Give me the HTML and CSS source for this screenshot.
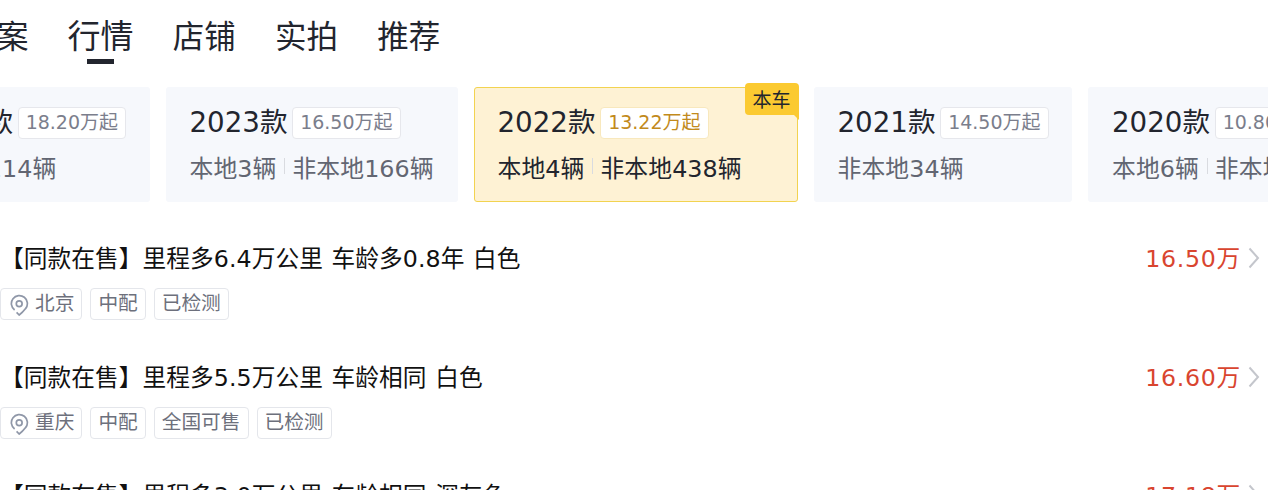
FILE: index.html
```html
<!DOCTYPE html>
<html lang="zh-CN">
<head>
  <meta charset="UTF-8">
  <meta name="viewport" content="width=device-width, initial-scale=1.0">
  <title>行情</title>
  <link rel="stylesheet" href="styles.css">
</head>
<body>
  <!-- 图标 -->
  <svg class="symbols">
    <symbol id="pin" viewBox="0 0 20 22">
      <path d="M5.6 16A8 8 0 1 1 16.6 14.6Q13.6 18.6 10.2 21L7.6 18.4" />
      <circle cx="10.2" cy="9.8" r="2.9" />
    </symbol>
    <symbol id="arrow" viewBox="0 0 12 22">
      <path d="M1.5 1.5 10 11 1.5 20.5" />
    </symbol>
  </svg>

  <div class="page">
    <ul class="tabs">
      <li>档案</li>
      <li class="active">行情</li>
      <li>店铺</li>
      <li>实拍</li>
      <li>推荐</li>
    </ul>

    <!-- 年款列表 -->
    <div class="years">
      <div class="year-card w-259">
        <div class="year-title">2024款<span class="price-tag">18.20万起</span></div>
        <div class="year-count"><span>非本地114辆</span></div>
      </div>
      <div class="year-card w-292">
        <div class="year-title">2023款<span class="price-tag">16.50万起</span></div>
        <div class="year-count"><span>本地3辆</span><i></i><span>非本地166辆</span></div>
      </div>
      <div class="year-card w-324 current">
        <div class="corner">本车</div>
        <div class="year-title">2022款<span class="price-tag">13.22万起</span></div>
        <div class="year-count"><span>本地4辆</span><i></i><span>非本地438辆</span></div>
      </div>
      <div class="year-card w-259">
        <div class="year-title">2021款<span class="price-tag">14.50万起</span></div>
        <div class="year-count"><span>非本地34辆</span></div>
      </div>
      <div class="year-card w-292">
        <div class="year-title">2020款<span class="price-tag">10.80万起</span></div>
        <div class="year-count"><span>本地6辆</span><i></i><span>非本地120辆</span></div>
      </div>
    </div>

    <!-- 同款在售列表 -->
    <div class="cars">
      <div class="car">
        <div class="car-head">
          <div class="car-title">【同款在售】里程多6.4万公里 车龄多0.8年 白色</div>
          <div class="car-price">16.50万<svg class="arrow"><use href="#arrow" /></svg></div>
        </div>
        <div class="tags">
          <span><svg class="pin"><use href="#pin" /></svg>北京</span>
          <span>中配</span>
          <span>已检测</span>
        </div>
      </div>
      <div class="car">
        <div class="car-head">
          <div class="car-title">【同款在售】里程多5.5万公里 车龄相同 白色</div>
          <div class="car-price">16.60万<svg class="arrow"><use href="#arrow" /></svg></div>
        </div>
        <div class="tags">
          <span><svg class="pin"><use href="#pin" /></svg>重庆</span>
          <span>中配</span>
          <span>全国可售</span>
          <span>已检测</span>
        </div>
      </div>
      <div class="car">
        <div class="car-head">
          <div class="car-title">【同款在售】里程多3.0万公里 车龄相同 深灰色</div>
          <div class="car-price">17.18万<svg class="arrow"><use href="#arrow" /></svg></div>
        </div>
      </div>
    </div>
  </div>
</body>
</html>
```
FILE: styles.css
```css
* {
  box-sizing: border-box;
}

body {
  margin: 0;
  background: #fff;
  color: #22252e;
  font-family: "DejaVu Sans", "Noto Sans CJK SC", sans-serif;
}

.symbols {
  display: none;
}

.page {
  width: 1268px;
  height: 490px;
  overflow: hidden;
}

/* 顶部标签 */
.tabs {
  display: flex;
  gap: 39.2px;
  height: 87px;
  margin: 0 0 0 -34.6px;
  padding: 0;
  list-style: none;
  font-size: 31.5px;
  line-height: 74px;
  white-space: nowrap;
}

.tabs .active {
  display: flex;
  flex-direction: column;
  align-items: center;
  font-size: 33px;
}

.tabs .active::after {
  content: "";
  width: 27px;
  height: 5px;
  margin-top: -15px;
  background: #22252e;
}

/* 年款卡片 */
.years {
  display: flex;
  gap: 16px;
  margin-left: -109px;
}

.year-card {
  position: relative;
  flex: none;
  height: 114.5px;
  padding: 19px 0 0 24px;
  border-radius: 3px;
  background: #f6f8fc;
  white-space: nowrap;
}

.w-259 {
  width: 258.5px;
}

.w-292 {
  width: 292px;
}

.w-324 {
  width: 324px;
}

.year-title {
  display: flex;
  align-items: center;
  height: 34px;
  font-size: 27.7px;
  line-height: 30px;
}

.price-tag {
  height: 32px;
  margin: 0 0 0 4.5px;
  padding: 0 7px;
  border: 1px solid #e6e7ec;
  border-radius: 4px;
  background: #fff;
  color: #7b7e8c;
  font-size: 19px;
  line-height: 28px;
}

.year-count {
  display: flex;
  align-items: center;
  height: 34px;
  margin-top: 9px;
  color: #626672;
  font-size: 23.8px;
  letter-spacing: 0.1px;
}

.year-count i {
  width: 1px;
  height: 16px;
  margin: 0 7px 0 8px;
  background: #d9dbe0;
}

.current {
  padding: 18px 0 0 23px;
  border: 1px solid #f2d350;
  background: #fef2d4;
}

.current .year-count {
  color: #22252e;
}

.current .price-tag {
  border-color: #f8e8bd;
  color: #c28a1c;
}

.corner {
  position: absolute;
  top: -5px;
  right: -2px;
  width: 54px;
  height: 32px;
  border-radius: 4px 4px 0 4px;
  background: #fbca31;
  font-size: 19px;
  line-height: 34px;
  text-align: center;
}

/* 角标折角 */
.corner::after {
  content: "";
  position: absolute;
  top: 100%;
  right: 0;
  border-top: 5px solid #fbca31;
  border-left: 5px solid transparent;
}

/* 在售车辆 */
.cars {
  padding-top: 38.5px;
}

.car {
  height: 118.5px;
}

.car-head {
  display: flex;
  justify-content: space-between;
  align-items: center;
  height: 34px;
  padding-right: 8px;
  color: #111;
  font-size: 23.7px;
  white-space: nowrap;
}

.car-title {
  letter-spacing: 0.07px;
  word-spacing: 1px;
}

.car-price {
  display: flex;
  align-items: center;
  color: #d9452f;
  letter-spacing: 0.7px;
}

.arrow {
  width: 12px;
  height: 22px;
  margin: 2px 0 0 7px;
  fill: none;
  stroke: #c4c6cc;
  stroke-width: 2;
}

.tags {
  display: flex;
  gap: 8px;
  margin-top: 14px;
}

.tags span {
  display: flex;
  align-items: center;
  height: 32px;
  padding: 0 7px;
  border: 1px solid #e4e6eb;
  border-radius: 4px;
  color: #6d707c;
  font-size: 19.7px;
  line-height: 28px;
}

.pin {
  width: 20px;
  height: 22px;
  margin: 2px 6px 0 1px;
  fill: none;
  stroke: #8f97a8;
  stroke-width: 1.7;
}
```
